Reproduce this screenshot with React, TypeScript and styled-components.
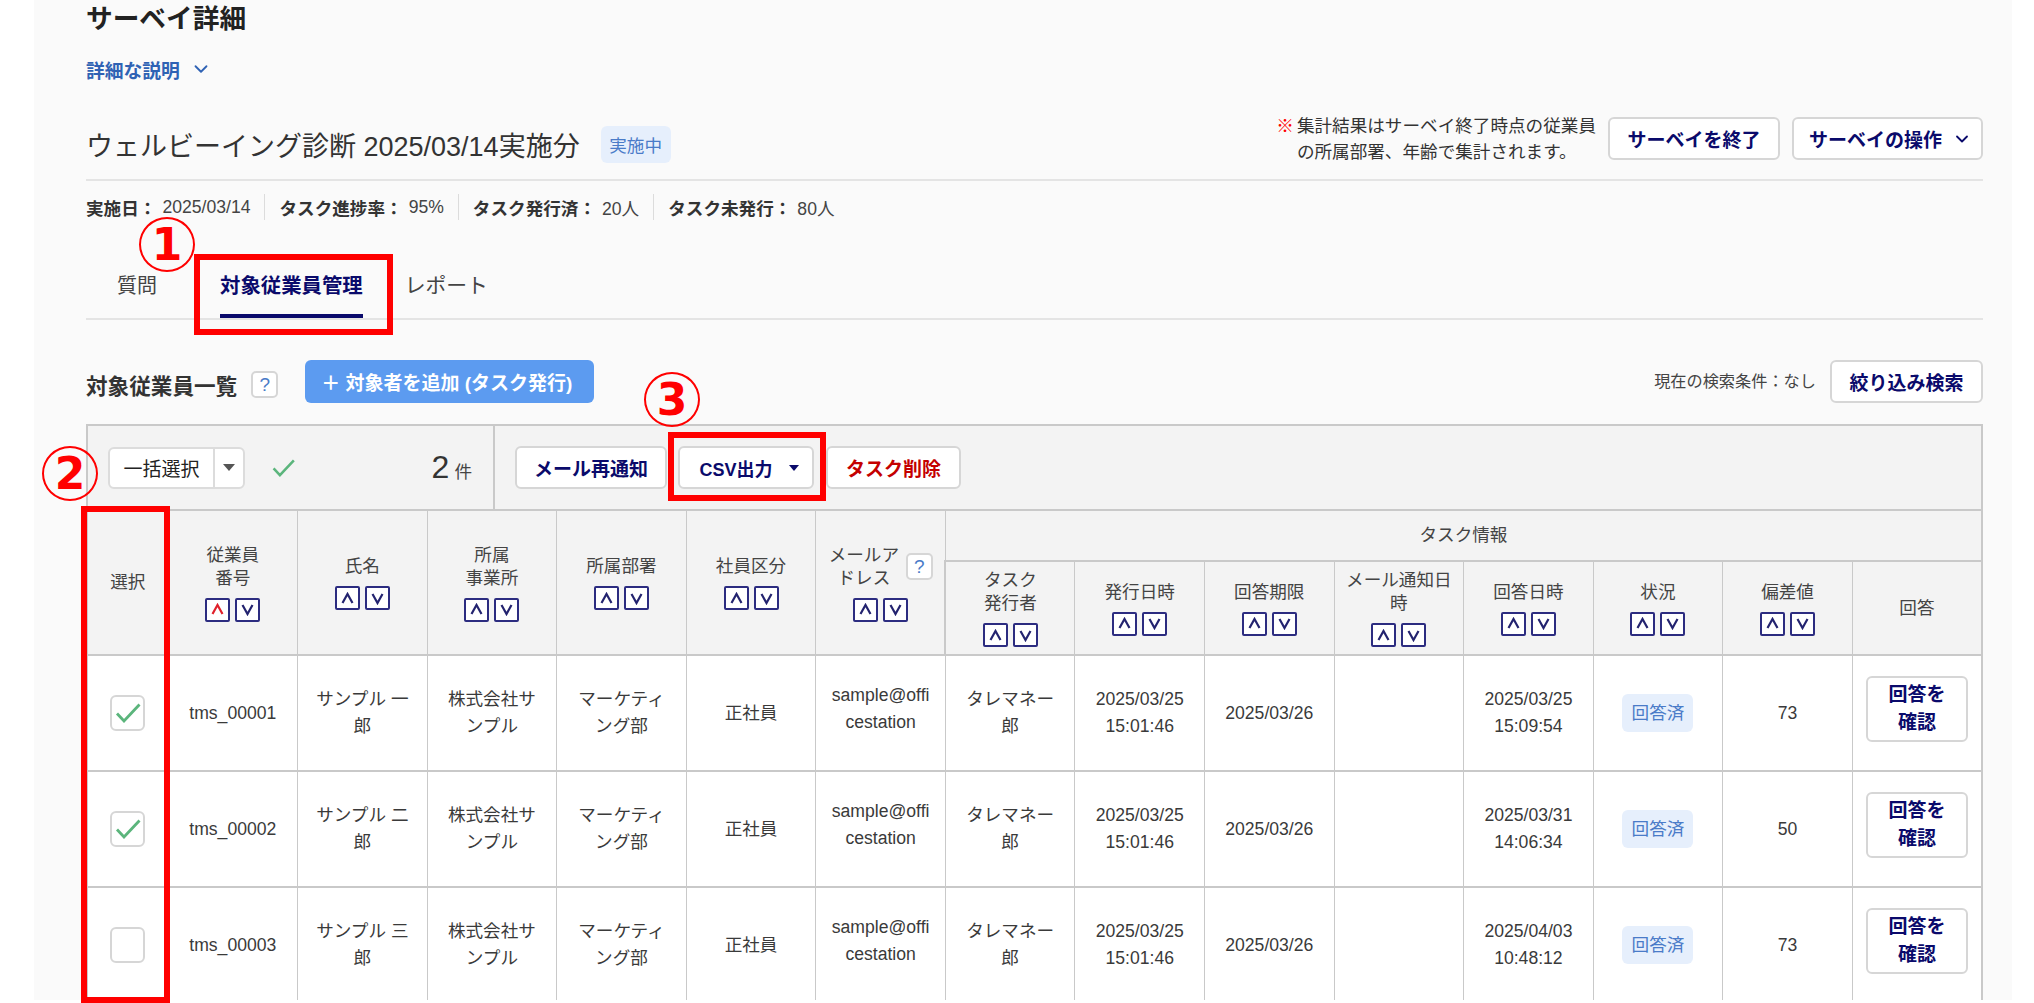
import React from "react"
import styled, { createGlobalStyle } from "styled-components"
import { ChevronDown } from "lucide-react"

const NAVY = "#0a0a6b"
const TEXT = "#333"
const LINE = "#c9c9c9"
const BLUE = "#4a7bc8"

const GlobalStyle = createGlobalStyle`
  html, body {
    margin: 0;
    background: #fff;
  }
  body {
    font-family: "Liberation Sans", "Noto Sans CJK JP", sans-serif;
    font-size: 17.6px;
    color: ${TEXT};
  }
`

const Page = styled.div`
  position: relative;
  height: 1003px;
  overflow: hidden;
`

const Panel = styled.main`
  box-sizing: border-box;
  margin-left: 34px;
  width: 1978px;
  height: 1000px;
  padding: 0 29px 0 52px;
  background: #fafafa;
  overflow: hidden;
`

const PageTitle = styled.h1`
  margin: 0;
  font-size: 26.7px;
  line-height: 38px;
  font-weight: 700;
  color: #222;
`

const DescLink = styled.a`
  display: flex;
  align-items: center;
  gap: 10px;
  height: 36px;
  margin-top: 13px;
  font-size: 18.8px;
  font-weight: 700;
  color: #2f62b4;
`

const SurveyHead = styled.header`
  display: flex;
  justify-content: space-between;
  align-items: flex-start;
  height: 62px;
  margin-top: 30px;
  border-bottom: 2px solid #e4e4e4;
`

const SurveyName = styled.div`
  display: flex;
  align-items: center;
  gap: 21px;
  height: 37px;
  margin-top: 9px;
  font-size: 27px;
  color: #333;
`

const Pill = styled.span`
  display: inline-flex;
  align-items: center;
  justify-content: center;
  border-radius: 6px;
  background: #e6effc;
  color: ${BLUE};
  font-size: 17.6px;
`

const SurveyPill = styled(Pill)`
  width: 70px;
  height: 37px;
`

const HeadActions = styled.div`
  display: flex;
  align-items: center;
  height: 43px;
`

const Note = styled.div`
  display: flex;
  gap: 3px;
  margin-right: 12px;
  line-height: 26px;
  white-space: nowrap;
`

const NoteMark = styled.span`
  color: #f00;
`

const Button = styled.button<{ $danger?: boolean; $width?: number }>`
  display: inline-flex;
  align-items: center;
  justify-content: center;
  box-sizing: border-box;
  width: ${p => (p.$width ? `${p.$width}px` : "auto")};
  height: 43px;
  padding: 0;
  border: 2px solid #d6d6d6;
  border-radius: 6px;
  background: #fff;
  color: ${p => (p.$danger ? "#c40000" : NAVY)};
  font: 700 19px "Liberation Sans", "Noto Sans CJK JP", sans-serif;
  white-space: nowrap;
`

const MenuButton = styled(Button)`
  gap: 10px;
  margin-left: 12px;
  padding-left: 6px;
`

const MetaRow = styled.dl`
  display: flex;
  margin: 13px 0 0;
  height: 26px;
`

const MetaItem = styled.div`
  display: flex;
  align-items: center;
  gap: 6px;
  padding: 0 14px;
  border-left: 1px solid #dcdcdc;

  &:first-child {
    padding-left: 0;
    border-left: none;
  }

  dt {
    font-weight: 700;
  }

  dd {
    margin: 0;
    font-size: 17.6px;
    color: #444;
  }
`

const TabBar = styled.nav`
  display: flex;
  align-items: flex-end;
  gap: 42px;
  height: 64px;
  margin-top: 34px;
  padding-left: 31px;
  border-bottom: 2px solid #e4e4e4;
`

const Tab = styled.div<{ $active?: boolean }>`
  box-sizing: border-box;
  height: 64px;
  padding-top: 18px;
  line-height: 28px;
  font-size: ${p => (p.$active ? "20.4px" : "20.8px")};
  font-weight: ${p => (p.$active ? 700 : 400)};
  color: ${p => (p.$active ? NAVY : "#444")};
  border-bottom: 4px solid ${p => (p.$active ? NAVY : "transparent")};

  &:first-child {
    margin-right: 21px;
    font-size: 20px;
  }
`

const ListHead = styled.section`
  display: flex;
  align-items: flex-start;
  height: 43px;
  margin-top: 40px;
`

const ListTitle = styled.div`
  display: flex;
  align-items: center;
  gap: 14px;
  height: 27px;
  margin-top: 11px;
  font-size: 21.6px;
  font-weight: 700;
  color: #333;
`

const HelpMark = styled.span`
  display: inline-flex;
  align-items: center;
  justify-content: center;
  box-sizing: border-box;
  flex: none;
  width: 27px;
  height: 27px;
  border: 2px solid #d6d6d6;
  border-radius: 5px;
  background: #fff;
  color: ${BLUE};
  font-size: 19px;
  font-weight: 400;
`

const AddButton = styled.button`
  display: inline-flex;
  align-items: center;
  gap: 8px;
  box-sizing: border-box;
  width: 289px;
  height: 43px;
  margin-left: 27px;
  padding: 0 0 0 16px;
  border: none;
  border-radius: 6px;
  background: #5c9bf0;
  color: #fff;
  font: 700 19px "Liberation Sans", "Noto Sans CJK JP", sans-serif;
  white-space: nowrap;
`

const SearchState = styled.span`
  margin-left: auto;
  margin-right: 14px;
  line-height: 43px;
  font-size: 16.2px;
  color: #444;
`

const Toolbar = styled.div`
  display: flex;
  box-sizing: border-box;
  height: 85px;
  margin-top: 21px;
  border: 2px solid ${LINE};
  border-bottom: none;
  background: #f3f3f3;
`

const ToolLeft = styled.div`
  display: flex;
  align-items: center;
  box-sizing: border-box;
  width: 407px;
  padding: 0 21px 0 20px;
  border-right: 2px solid ${LINE};
`

const BulkSelect = styled.div`
  display: flex;
  box-sizing: border-box;
  width: 137px;
  height: 42px;
  border: 2px solid #dcdcdc;
  border-radius: 6px;
  background: #fff;
  font-size: 19px;
  color: #222;
`

const BulkLabel = styled.span`
  display: flex;
  align-items: center;
  justify-content: center;
  width: 103px;
  border-right: 2px solid #dcdcdc;
`

const BulkCaret = styled.span`
  display: flex;
  flex: 1;
  align-items: center;
  justify-content: center;
`

const Caret = styled.i<{ $color: string; $half: number }>`
  display: block;
  width: 0;
  height: 0;
  border-left: ${p => p.$half}px solid transparent;
  border-right: ${p => p.$half}px solid transparent;
  border-top: ${p => p.$half + 1}px solid ${p => p.$color};
`

const ToolCheck = styled.span`
  margin-left: 26px;
  line-height: 0;
`

const Count = styled.div`
  display: flex;
  align-items: baseline;
  gap: 5px;
  margin-left: auto;
  font-size: 17.6px;
  color: #444;

  b {
    font-size: 32px;
    font-weight: 400;
    color: #333;
  }
`

const ToolRight = styled.div`
  display: flex;
  align-items: center;
  gap: 11px;
  padding-left: 20px;
`

const CsvButton = styled(Button)`
  gap: 16px;
  margin-right: 1px;
  padding-left: 6px;
  font-size: 18px;
`

const Table = styled.table`
  width: 100%;
  table-layout: fixed;
  border-collapse: collapse;
  text-align: center;

  th,
  td {
    border: 1px solid ${LINE};
    border-top-width: 2px;
    border-bottom-width: 2px;
    vertical-align: middle;
  }

  th:first-child,
  td:first-child {
    border-left-width: 2px;
  }

  th:last-child,
  td:last-child {
    border-right-width: 2px;
  }
`

const SelectCol = styled.col`
  width: 81px;
`

const HeadRowTop = styled.tr`
  height: 51px;
`

const HeadRowSub = styled.tr`
  height: 94px;
`

const BodyRow = styled.tr`
  height: 116px;
`

const HeadCell = styled.th`
  padding: 0 6px;
  background: #f3f3f3;
  font-weight: 400;
  line-height: 23px;
  color: #444;
`

const BodyCell = styled.td`
  padding: 0 13px;
  background: #fff;
  line-height: 27px;
  color: #3a3a3a;
  word-break: break-all;
`

const EmailCell = styled(BodyCell)`
  padding-bottom: 8px;
`

const HeadWithHelp = styled.div`
  display: flex;
  align-items: center;
  justify-content: center;
  gap: 6px;

  span:first-child {
    width: 72px;
  }
`

const SortPair = styled.div`
  display: flex;
  justify-content: center;
  gap: 5px;
  margin-top: 8px;
`

const SortBtn = styled.span`
  display: flex;
  align-items: center;
  justify-content: center;
  box-sizing: border-box;
  width: 25px;
  height: 24px;
  border: 2px solid #2c2c80;
  border-radius: 2px;
  background: #fff;
`

const CheckBox = styled.span`
  display: inline-flex;
  align-items: center;
  justify-content: center;
  box-sizing: border-box;
  width: 35px;
  height: 36px;
  border: 2px solid #d6d6d6;
  border-radius: 6px;
  background: #fff;
  vertical-align: middle;
`

const StatusPill = styled(Pill)`
  width: 71px;
  height: 38px;
`

const ConfirmButton = styled(Button)`
  height: 66px;
  margin: 0 0 8px 0;
  line-height: 28px;
  vertical-align: middle;
`

const RedBox = styled.div<{ $x: number; $y: number; $w: number; $h: number }>`
  position: absolute;
  left: ${p => p.$x}px;
  top: ${p => p.$y}px;
  width: ${p => p.$w}px;
  height: ${p => p.$h}px;
  box-sizing: border-box;
  border: 6px solid #f00;
  pointer-events: none;
`

const Marker = styled.div<{ $x: number; $y: number }>`
  position: absolute;
  left: ${p => p.$x}px;
  top: ${p => p.$y}px;
  display: flex;
  align-items: center;
  justify-content: center;
  box-sizing: border-box;
  width: 56px;
  height: 55px;
  border: 2px solid #f00;
  border-radius: 50%;
  color: #f00;
  font: 700 44px "DejaVu Sans", sans-serif;
`

const CheckMark = ({ w, h }: { w: number; h: number }) => (
  <svg width={w} height={h} viewBox="0 0 26 20" fill="none">
    <path d="M2 10.5 L9 18 L24.5 1.5" stroke="#5bb57c" strokeWidth="2.8" />
  </svg>
)

const Sort = ({ dir, active }: { dir: "up" | "down"; active?: boolean }) => (
  <SortBtn>
    <svg width="15" height="13" viewBox="0 0 15 13" fill="none">
      <path
        d={dir === "up" ? "M2.5 11 L7.5 2 L12.5 11" : "M2.5 2 L7.5 11 L12.5 2"}
        stroke={active ? "#e0202a" : "#23236f"}
        strokeWidth="2.2"
      />
    </svg>
  </SortBtn>
)

const SortButtons = ({ active }: { active?: boolean }) => (
  <SortPair>
    <Sort dir="up" active={active} />
    <Sort dir="down" />
  </SortPair>
)

const rows = [
  { id: "tms_00001", name: "サンプル 一郎", done: "2025/03/25 15:09:54", score: 73, checked: true },
  { id: "tms_00002", name: "サンプル 二郎", done: "2025/03/31 14:06:34", score: 50, checked: true },
  { id: "tms_00003", name: "サンプル 三郎", done: "2025/04/03 10:48:12", score: 73, checked: false }
]

export default function App() {
  return (
    <Page>
      <GlobalStyle />
      <Panel>
        <PageTitle>サーベイ詳細</PageTitle>
        <DescLink>
          詳細な説明
          <ChevronDown size={22} strokeWidth={2} color="#2f62b4" />
        </DescLink>

        <SurveyHead>
          <SurveyName>
            ウェルビーイング診断 2025/03/14実施分
            <SurveyPill>実施中</SurveyPill>
          </SurveyName>
          <HeadActions>
            <Note>
              <NoteMark>※</NoteMark>
              <span>
                集計結果はサーベイ終了時点の従業員
                <br />
                の所属部署、年齢で集計されます。
              </span>
            </Note>
            <Button $width={172}>サーベイを終了</Button>
            <MenuButton $width={191}>
              サーベイの操作
              <ChevronDown size={20} strokeWidth={2.2} color={NAVY} />
            </MenuButton>
          </HeadActions>
        </SurveyHead>

        <MetaRow>
          <MetaItem>
            <dt>実施日：</dt>
            <dd>2025/03/14</dd>
          </MetaItem>
          <MetaItem>
            <dt>タスク進捗率：</dt>
            <dd>95%</dd>
          </MetaItem>
          <MetaItem>
            <dt>タスク発行済：</dt>
            <dd>20人</dd>
          </MetaItem>
          <MetaItem>
            <dt>タスク未発行：</dt>
            <dd>80人</dd>
          </MetaItem>
        </MetaRow>

        <TabBar>
          <Tab>質問</Tab>
          <Tab $active>対象従業員管理</Tab>
          <Tab>レポート</Tab>
        </TabBar>

        <ListHead>
          <ListTitle>
            対象従業員一覧
            <HelpMark>?</HelpMark>
          </ListTitle>
          <AddButton>＋ 対象者を追加 (タスク発行)</AddButton>
          <SearchState>現在の検索条件：なし</SearchState>
          <Button $width={153}>絞り込み検索</Button>
        </ListHead>

        <Toolbar>
          <ToolLeft>
            <BulkSelect>
              <BulkLabel>一括選択</BulkLabel>
              <BulkCaret>
                <Caret $color="#555" $half={6} />
              </BulkCaret>
            </BulkSelect>
            <ToolCheck>
              <CheckMark w={25} h={18} />
            </ToolCheck>
            <Count>
              <b>2</b>件
            </Count>
          </ToolLeft>
          <ToolRight>
            <Button $width={152}>メール再通知</Button>
            <CsvButton $width={136}>
              CSV出力
              <Caret $color={NAVY} $half={5} />
            </CsvButton>
            <Button $danger $width={135}>タスク削除</Button>
          </ToolRight>
        </Toolbar>

        <Table>
          <colgroup>
            <SelectCol />
          </colgroup>
          <thead>
            <HeadRowTop>
              <HeadCell rowSpan={2}>選択</HeadCell>
              <HeadCell rowSpan={2}>
                従業員
                <br />
                番号
                <SortButtons active />
              </HeadCell>
              <HeadCell rowSpan={2}>
                氏名
                <SortButtons />
              </HeadCell>
              <HeadCell rowSpan={2}>
                所属
                <br />
                事業所
                <SortButtons />
              </HeadCell>
              <HeadCell rowSpan={2}>
                所属部署
                <SortButtons />
              </HeadCell>
              <HeadCell rowSpan={2}>
                社員区分
                <SortButtons />
              </HeadCell>
              <HeadCell rowSpan={2}>
                <HeadWithHelp>
                  <span>メールアドレス</span>
                  <HelpMark>?</HelpMark>
                </HeadWithHelp>
                <SortButtons />
              </HeadCell>
              <HeadCell colSpan={8}>タスク情報</HeadCell>
            </HeadRowTop>
            <HeadRowSub>
              <HeadCell>
                タスク
                <br />
                発行者
                <SortButtons />
              </HeadCell>
              <HeadCell>
                発行日時
                <SortButtons />
              </HeadCell>
              <HeadCell>
                回答期限
                <SortButtons />
              </HeadCell>
              <HeadCell>
                メール通知日時
                <SortButtons />
              </HeadCell>
              <HeadCell>
                回答日時
                <SortButtons />
              </HeadCell>
              <HeadCell>
                状況
                <SortButtons />
              </HeadCell>
              <HeadCell>
                偏差値
                <SortButtons />
              </HeadCell>
              <HeadCell>回答</HeadCell>
            </HeadRowSub>
          </thead>
          <tbody>
            {rows.map(r => (
              <BodyRow key={r.id}>
                <BodyCell>
                  <CheckBox>{r.checked && <CheckMark w={26} h={20} />}</CheckBox>
                </BodyCell>
                <BodyCell>{r.id}</BodyCell>
                <BodyCell>{r.name}</BodyCell>
                <BodyCell>株式会社サンプル</BodyCell>
                <BodyCell>マーケティング部</BodyCell>
                <BodyCell>正社員</BodyCell>
                <EmailCell>sample@officestation</EmailCell>
                <BodyCell>タレマネー郎</BodyCell>
                <BodyCell>
                  2025/03/25
                  <br />
                  15:01:46
                </BodyCell>
                <BodyCell>2025/03/26</BodyCell>
                <BodyCell />
                <BodyCell>
                  {r.done.split(" ")[0]}
                  <br />
                  {r.done.split(" ")[1]}
                </BodyCell>
                <BodyCell>
                  <StatusPill>回答済</StatusPill>
                </BodyCell>
                <BodyCell>{r.score}</BodyCell>
                <BodyCell>
                  <ConfirmButton $width={102}>
                    回答を
                    <br />
                    確認
                  </ConfirmButton>
                </BodyCell>
              </BodyRow>
            ))}
          </tbody>
        </Table>
      </Panel>

      <Marker $x={139} $y={217}>1</Marker>
      <RedBox $x={194} $y={254} $w={199} $h={81} />
      <Marker $x={42} $y={446}>2</Marker>
      <RedBox $x={81} $y={506} $w={89} $h={497} />
      <Marker $x={644} $y={372}>3</Marker>
      <RedBox $x={668} $y={432} $w={158} $h={69} />
    </Page>
  )
}
